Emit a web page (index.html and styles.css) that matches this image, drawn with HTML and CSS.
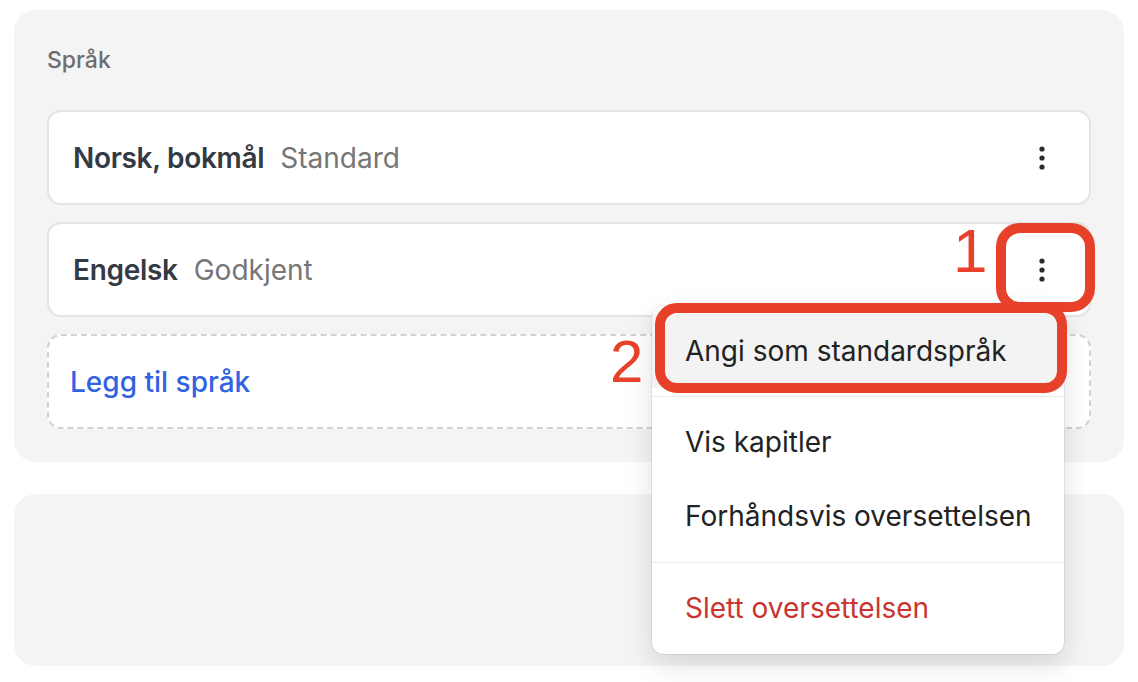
FILE: index.html
```html
<!DOCTYPE html>
<html lang="no">
<head>
<meta charset="utf-8">
<title>Språk</title>
<link rel="stylesheet" href="styles.css">
</head>
<body>
<div class="page">
  <section class="panel">
    <h2 class="panel-title">Språk</h2>
    <div class="lang-list">
      <div class="lang-card">
        <span class="lang-name">Norsk, bokmål</span>
        <span class="lang-status">Standard</span>
        <button class="kebab" aria-label="Meny">
          <svg width="6" height="24" viewBox="0 0 6 24"><circle cx="3" cy="3" r="2.6"/><circle cx="3" cy="12" r="2.6"/><circle cx="3" cy="21" r="2.6"/></svg>
        </button>
      </div>
      <div class="lang-card">
        <span class="lang-name">Engelsk</span>
        <span class="lang-status">Godkjent</span>
        <button class="kebab" aria-label="Meny">
          <svg width="6" height="24" viewBox="0 0 6 24"><circle cx="3" cy="3" r="2.6"/><circle cx="3" cy="12" r="2.6"/><circle cx="3" cy="21" r="2.6"/></svg>
        </button>
        <div class="menu">
          <div class="menu-group">
            <div class="menu-item active">Angi som standardspråk</div>
          </div>
          <div class="menu-group">
            <div class="menu-item">Vis kapitler</div>
            <div class="menu-item">Forhåndsvis oversettelsen</div>
          </div>
          <div class="menu-group">
            <div class="menu-item danger">Slett oversettelsen</div>
          </div>
        </div>
      </div>
      <div class="add-card">
        <span class="add-label">Legg til språk</span>
        <svg class="add-icon" width="20" height="20" viewBox="0 0 20 20"><path d="M10 3v14M3 10h14"/></svg>
      </div>
    </div>
  </section>
  <section class="panel panel-empty"></section>

  <div class="mark mark-1"></div>
  <div class="mark mark-2"></div>
  <span class="step step-1">1</span>
  <span class="step step-2">2</span>
</div>
</body>
</html>
```

FILE: styles.css
```css
* { box-sizing: border-box; }

html, body {
  margin: 0;
  padding: 0;
  background: #ffffff;
  font-family: "Inter", "Noto Sans", sans-serif;
}

.page {
  position: relative;
  width: 1138px;
  height: 682px;
  padding: 10px 14px 0 14px;
  display: flex;
  flex-direction: column;
  gap: 32px;
}

.panel {
  background: #f4f4f4;
  border-radius: 22px;
  padding: 33px 33px 33px 33px;
}

.panel-title {
  margin: 0 0 33px 0;
  font-size: 23px;
  line-height: 34px;
  font-weight: 500;
  color: #6e6e6e;
}

.lang-list {
  display: flex;
  flex-direction: column;
  gap: 17px;
}

.lang-card {
  position: relative;
  height: 95px;
  background: #ffffff;
  border: 2px solid #e4e4e4;
  border-radius: 14px;
  display: flex;
  align-items: center;
  gap: 16px;
  padding: 0 27px 0 24px;
}

.lang-name {
  font-size: 28px;
  font-weight: 600;
  letter-spacing: -0.3px;
  color: #343a43;
}

.lang-status {
  font-size: 28px;
  font-weight: 400;
  color: #767676;
}

.kebab {
  margin-left: auto;
  width: 40px;
  height: 40px;
  border: 0;
  background: transparent;
  padding: 0;
  display: flex;
  align-items: center;
  justify-content: center;
}

.kebab svg { fill: #2b2b2b; }

.add-card {
  height: 95px;
  border: 2px dashed #d2d2d2;
  border-radius: 14px;
  background: #ffffff;
  display: flex;
  align-items: center;
  justify-content: space-between;
  padding: 0 22px 0 21px;
}

.add-label {
  font-size: 28px;
  font-weight: 500;
  color: #3162e0;
}

.add-icon {
  stroke: #3162e0;
  stroke-width: 2.4;
  fill: none;
}

.panel-empty {
  height: 172px;
  flex: none;
}

.menu {
  position: absolute;
  z-index: 10;
  top: 82px;
  right: 25px;
  width: 412px;
  background: #ffffff;
  border-radius: 12px;
  box-shadow: 0 0 0 1px rgba(0, 0, 0, 0.06), 0 10px 28px rgba(0, 0, 0, 0.13);
  overflow: hidden;
}

.menu-group {
  padding: 8px 0 9px;
  border-top: 1px solid #ececec;
}

.menu-group:first-child {
  border-top: 0;
  padding: 8px 0 8px;
}

.menu-item {
  height: 74px;
  display: flex;
  align-items: center;
  padding: 0 20px 0 33px;
  font-size: 28px;
  white-space: nowrap;
  color: #222222;
}

.menu-item.active { background: #f3f3f3; }

.menu-item.danger { color: #c9352e; }

.mark {
  position: absolute;
  z-index: 20;
  border: 10px solid #e8412a;
  border-radius: 24px;
}

.mark-1 {
  left: 996px;
  top: 223px;
  width: 99px;
  height: 89px;
}

.mark-2 {
  left: 655px;
  top: 303px;
  width: 412px;
  height: 90px;
  border-radius: 22px;
}

.step {
  position: absolute;
  z-index: 20;
  font-family: "Liberation Sans", Arial, sans-serif;
  line-height: 1;
  color: #e8412a;
}

.step-1 {
  left: 953px;
  top: 220px;
  font-size: 62px;
}

.step-2 {
  left: 610px;
  top: 332px;
  font-size: 60px;
}
```
